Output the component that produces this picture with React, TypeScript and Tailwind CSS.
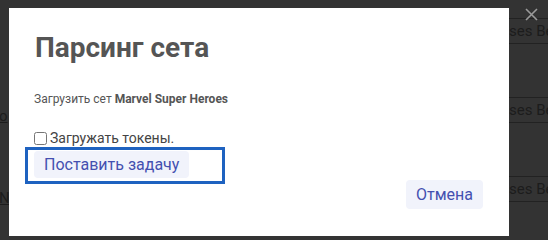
import React from 'react';

const rows = [0, 1, 2];

const App: React.FC = () => {
  return (
    <div className="relative w-[548px] h-[240px] overflow-hidden bg-[#333333] font-['Roboto',sans-serif]">
      {/* Page behind the dialog */}
      <div className="flex h-full">
        <div className="w-[9px] overflow-hidden pt-[107px] text-[15px] leading-[18px] text-[#1c1c1c]">
          <div className="underline -ml-[1px]">o</div>
          <div className="underline mt-[64px] -ml-[1px]">N</div>
        </div>
        <div className="flex-1" />
        <div className="w-[39px] overflow-hidden pt-[18px]">
          {rows.map((r) => (
            <div
              key={r}
              className="h-[26px] mb-[53px] border-y border-[#222222] whitespace-nowrap text-[15px] leading-[24px] text-[#1c1c1c]"
            >
              ses Be
            </div>
          ))}
        </div>
      </div>

      {/* Close icon */}
      <button className="absolute left-[525px] top-[8px] w-[13px] h-[13px]">
        <svg viewBox="0 0 13 13" className="w-[13px] h-[13px]" stroke="#9a9a9a" strokeWidth="1.6">
          <path d="M1 1 L12 12 M12 1 L1 12" />
        </svg>
      </button>

      {/* Dialog */}
      <div className="absolute left-[9px] top-[8px] w-[500px] h-[228px] bg-white flex flex-col">
        <h2 className="pl-[26px] pt-[24px] text-[28px] leading-[32px] font-bold text-[#555555]">Парсинг сета</h2>
        <p className="pl-[25px] mt-[27px] text-[12px] leading-[16px] text-[#555555]">
          Загрузить сет <b className="font-bold">Marvel Super Heroes</b>
        </p>
        <label className="flex items-center pl-[25px] mt-[23px] text-[14px] leading-[17px] text-[#444444]">
          <input type="checkbox" className="w-[13px] h-[13px] m-0 mr-[3px]" />
          Загружать токены.
        </label>
        <div className="ml-[16px] w-[200px] h-[37px] border-[3px] border-[#1e62c0] pl-[6px] pt-[1px]">
          <button className="h-[27px] px-[10px] rounded-[4px] bg-[#f1f3fb] text-[16px] text-[#4450b0]">
            Поставить задачу
          </button>
        </div>
        <div className="flex justify-end pr-[26px] mt-[-4px]">
          <button className="h-[29px] px-[10px] rounded-[4px] bg-[#f1f3fb] text-[16px] text-[#4450b0]">
            Отмена
          </button>
        </div>
      </div>
    </div>
  );
};

export default App;
